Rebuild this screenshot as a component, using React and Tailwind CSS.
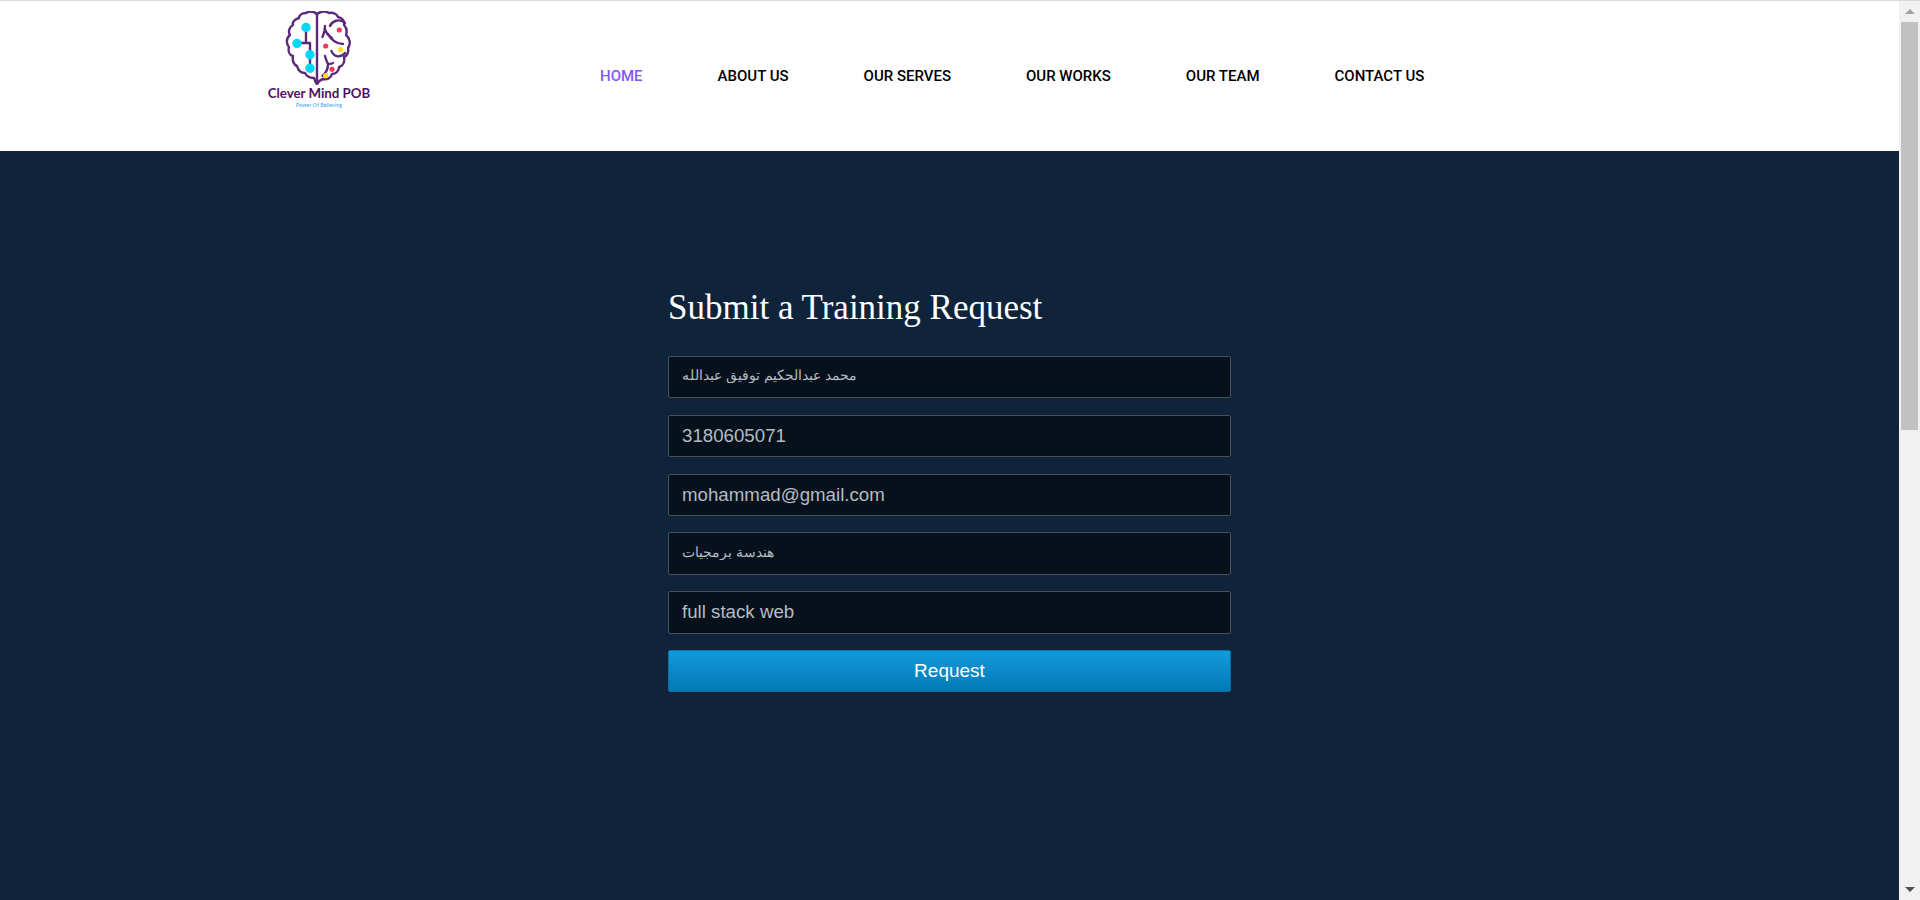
import React from "react";

const navLinks = ["HOME", "ABOUT US", "OUR SERVES", "OUR WORKS", "OUR TEAM", "CONTACT US"];

const fields = [
  { value: "محمد عبدالحكيم توفيق عبدالله", arabic: true },
  { value: "3180605071" },
  { value: "mohammad@gmail.com" },
  { value: "هندسة برمجيات", arabic: true },
  { value: "full stack web" },
];

const BrainLogo = () => (
  <svg width="68" height="74" viewBox="0 0 68 74" fill="none" className="block">
    <g stroke="#5a2a78" strokeWidth="2.4" strokeLinecap="round" strokeLinejoin="round">
      {/* outline, left half */}
      <path d="M32 3 C28 0 24 0 21 2 C17 2 14 4 14 7 C10 8 7 11 8 14 C4 16 3 21 5 24 C1 27 1 33 4 36 C3 40 4 44 8 45 C7 50 9 54 12 55 C13 59 16 62 20 62 C22 66 26 67 29 67 C30 70 31 72 32 73" />
      {/* outline, right half */}
      <path d="M32 3 C36 0 41 0 44 2 C48 1 52 3 53 6 C57 7 60 10 59 14 C62 17 62 21 61 24 C65 27 66 33 63 37 C64 41 62 45 59 46 C60 51 58 55 54 56 C54 60 51 63 47 63 C46 67 42 69 38 68 C35 69 33 71 32 73" />
      <path d="M32 3 V73" />
      {/* left circuit */}
      <path d="M21 16 V32 M12 32 H25 V57" />
      {/* right folds */}
      <path d="M40 15 C40 19 39 23 37.5 26 M40 18 C41 22 44 25 47 27" />
      <path d="M45 15 C47 10 54 7 60 12" />
      <path d="M43 23 C46 29 52 33 58 33" />
      <path d="M46.5 40 C48 45 55 48 60 42" />
      <path d="M40 45 C41 49 42 51 43 53 C45 53 47 53 48 52 M43 53 C43 58 41 62 37.5 65" />
    </g>
    <circle cx="21" cy="16.5" r="4.7" fill="#00d8f5" />
    <circle cx="12" cy="32.5" r="4.7" fill="#00d8f5" />
    <circle cx="25" cy="43.7" r="4.7" fill="#00d8f5" />
    <circle cx="25" cy="57.3" r="4.7" fill="#00d8f5" />
    <circle cx="54.3" cy="19" r="2.6" fill="#ee3a5c" />
    <circle cx="40.7" cy="35" r="2.6" fill="#ee3a5c" />
    <circle cx="55.7" cy="38.7" r="2.6" fill="#ffdc1e" />
    <circle cx="47" cy="58.3" r="2.6" fill="#ee3a5c" />
    <circle cx="40.7" cy="64.7" r="2.6" fill="#ffdc1e" />
  </svg>
);

const ScrollBar = () => (
  <div className="w-[21px] shrink-0 h-[899px] bg-[#f1f1f1] flex flex-col items-center">
    <div className="h-[21px] w-full flex items-center justify-center">
      <div className="w-0 h-0 border-x-[5px] border-x-transparent border-b-[5px] border-b-[#a3a3a3]" />
    </div>
    <div className="w-[17px] h-[408px] bg-[#c1c1c1]" />
    <div className="flex-1" />
    <div className="h-[21px] w-full flex items-center justify-center">
      <div className="w-0 h-0 border-x-[5px] border-x-transparent border-t-[5px] border-t-[#505050]" />
    </div>
  </div>
);

export default function App() {
  return (
    <div className="h-[900px] overflow-hidden flex flex-col border-t border-[#d9d9d9]">
      <div className="flex flex-1 min-h-0">
        <div className="flex-1 min-w-0 flex flex-col">
          {/* Header */}
          <header className="h-[150px] bg-white flex items-start">
            <div className="ml-[268px] w-[102px] pt-[10px] flex flex-col items-center">
              <BrainLogo />
              <p className="text-[13.3px] leading-[16px] font-bold text-[#4f1263] whitespace-nowrap font-['Lato',sans-serif]">
                Clever Mind POB
              </p>
              <p className="text-[5.5px] leading-[8px] text-[#3ea2f2] whitespace-nowrap font-['Lato',sans-serif]">
                Power Of Believing
              </p>
            </div>
            <nav className="ml-[230px] pt-[65px] flex gap-[75px] font-['Roboto',sans-serif] text-[15px] leading-[20px] font-medium">
              {navLinks.map((link, i) => (
                <a key={link} href="#" className={i === 0 ? "text-[#8257f5]" : "text-black"}>
                  {link}
                </a>
              ))}
            </nav>
          </header>

          {/* Request form */}
          <main className="flex-1 bg-[#0f243a] pl-[668px] pt-[137px]">
            <form className="w-[563px]">
              <h1 className="font-['Liberation_Serif',serif] text-[35px] leading-[40px] text-white mb-[28px]">
                Submit a Training Request
              </h1>
              {fields.map((field) => (
                <input
                  key={field.value}
                  type="text"
                  defaultValue={field.value}
                  className={`block w-full h-[42.4px] mb-[16.4px] px-[13px] rounded-[2px] bg-[#07111b] border border-[#49505a] text-[#b4bcc4] font-['Liberation_Sans',sans-serif] ${
                    field.arabic ? "text-[14.4px] pb-[4px]" : "text-[18.7px]"
                  }`}
                />
              ))}
              <button
                type="button"
                className="block w-full h-[42.4px] rounded-[2px] bg-gradient-to-b from-[#129bdb] to-[#0479b5] border border-[#0a6fa5] text-white text-[19px] font-['Liberation_Sans',sans-serif]"
              >
                Request
              </button>
            </form>
          </main>
        </div>
        <ScrollBar />
      </div>
    </div>
  );
}
